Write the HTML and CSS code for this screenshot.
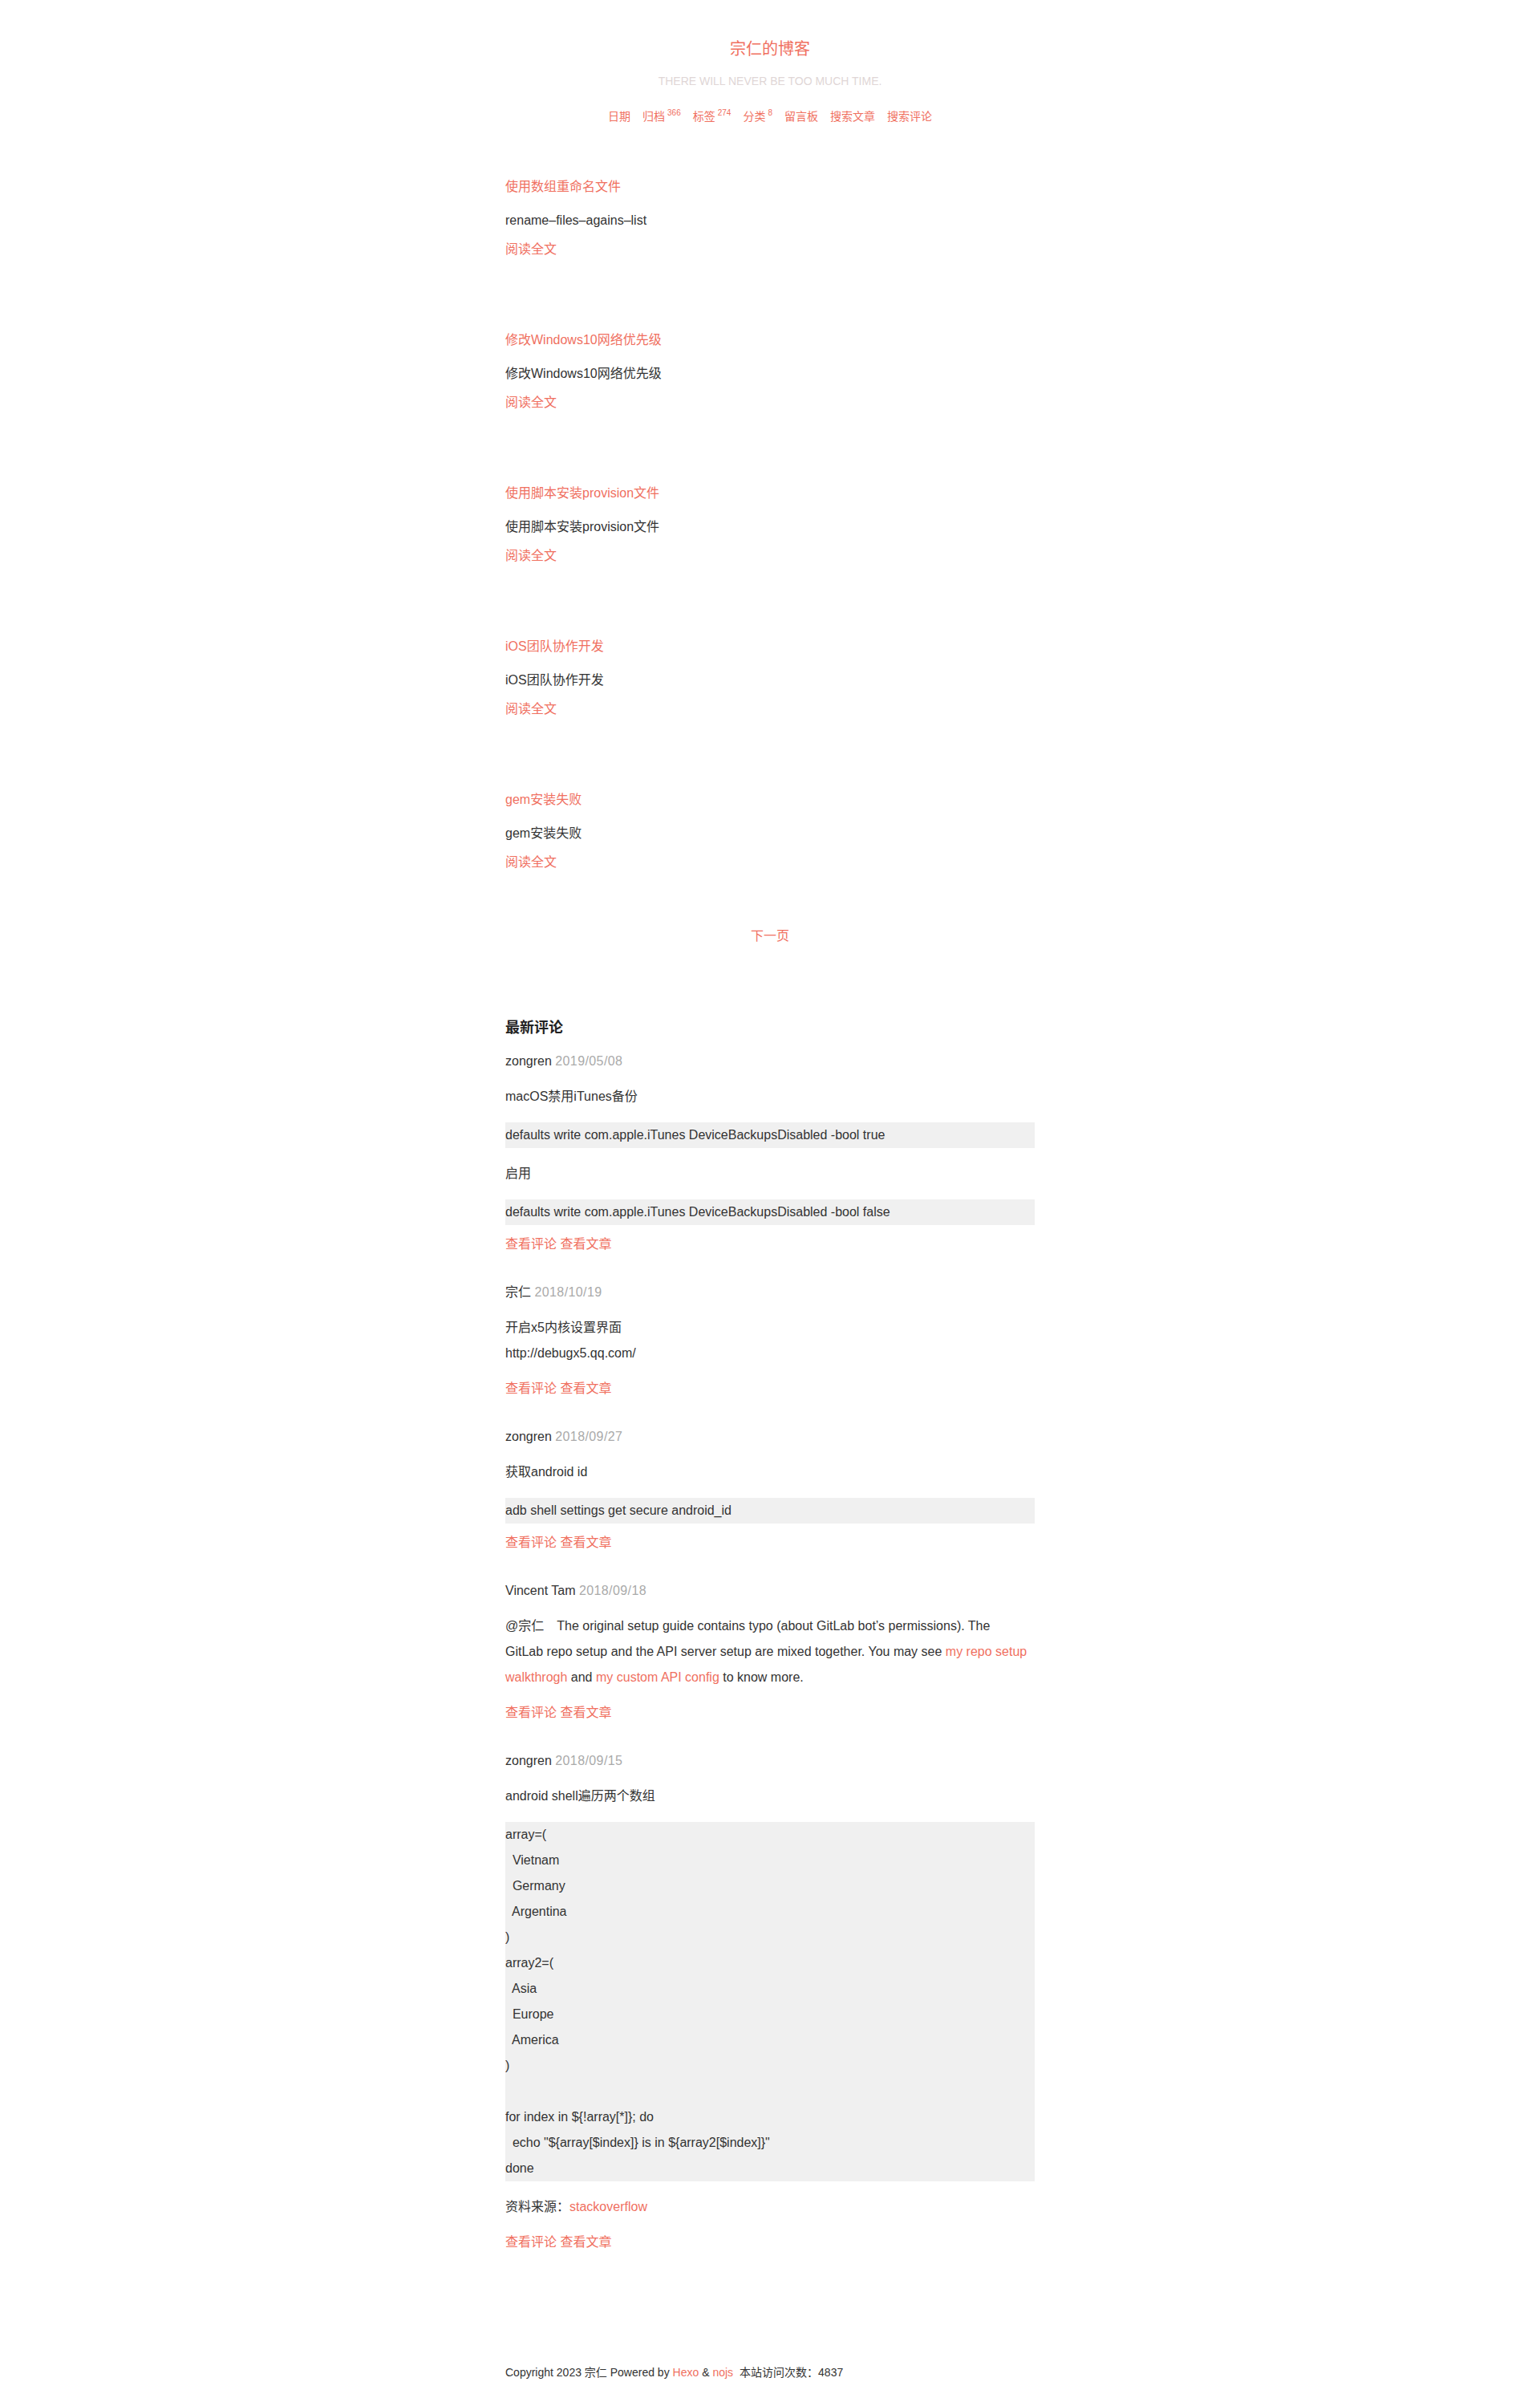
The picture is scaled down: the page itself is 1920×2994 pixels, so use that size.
FILE: index.html
```html
<!DOCTYPE html>
<html lang="zh-CN">
<head>
<meta charset="utf-8">
<title>宗仁的博客</title>
<link rel="stylesheet" href="styles.css">
</head>
<body>
<div class="page">
  <header class="site-header">
    <h1 class="site-title"><a href="#">宗仁的博客</a></h1>
    <p class="site-subtitle">THERE WILL NEVER BE TOO MUCH TIME.</p>
    <nav class="site-nav">
      <a href="#">日期</a>
      <a href="#">归档<sup>366</sup></a>
      <a href="#">标签<sup>274</sup></a>
      <a href="#">分类<sup>8</sup></a>
      <a href="#">留言板</a>
      <a href="#">搜索文章</a>
      <a href="#">搜索评论</a>
    </nav>
  </header>

  <main class="content">
    <section class="posts">
      <article class="post">
        <h2 class="post-title"><a href="#">使用数组重命名文件</a></h2>
        <p class="post-excerpt">rename–files–agains–list</p>
        <a class="post-more" href="#">阅读全文</a>
      </article>
      <article class="post">
        <h2 class="post-title"><a href="#">修改Windows10网络优先级</a></h2>
        <p class="post-excerpt">修改Windows10网络优先级</p>
        <a class="post-more" href="#">阅读全文</a>
      </article>
      <article class="post">
        <h2 class="post-title"><a href="#">使用脚本安装provision文件</a></h2>
        <p class="post-excerpt">使用脚本安装provision文件</p>
        <a class="post-more" href="#">阅读全文</a>
      </article>
      <article class="post">
        <h2 class="post-title"><a href="#">iOS团队协作开发</a></h2>
        <p class="post-excerpt">iOS团队协作开发</p>
        <a class="post-more" href="#">阅读全文</a>
      </article>
      <article class="post">
        <h2 class="post-title"><a href="#">gem安装失败</a></h2>
        <p class="post-excerpt">gem安装失败</p>
        <a class="post-more" href="#">阅读全文</a>
      </article>
    </section>

    <div class="pager"><a href="#">下一页</a></div>

    <section class="comments">
      <h3 class="comments-title">最新评论</h3>

      <div class="comment">
        <div class="c-meta">zongren <span class="c-date">2019/05/08</span></div>
        <div class="c-body">
          <p>macOS禁用iTunes备份</p>
          <pre>defaults write com.apple.iTunes DeviceBackupsDisabled -bool true</pre>
          <p>启用</p>
          <pre>defaults write com.apple.iTunes DeviceBackupsDisabled -bool false</pre>
        </div>
        <div class="c-links"><a href="#">查看评论</a> <a href="#">查看文章</a></div>
      </div>

      <div class="comment">
        <div class="c-meta">宗仁 <span class="c-date">2018/10/19</span></div>
        <div class="c-body">
          <p>开启x5内核设置界面<br>http://debugx5.qq.com/</p>
        </div>
        <div class="c-links"><a href="#">查看评论</a> <a href="#">查看文章</a></div>
      </div>

      <div class="comment">
        <div class="c-meta">zongren <span class="c-date">2018/09/27</span></div>
        <div class="c-body">
          <p>获取android id</p>
          <pre>adb shell settings get secure android_id</pre>
        </div>
        <div class="c-links"><a href="#">查看评论</a> <a href="#">查看文章</a></div>
      </div>

      <div class="comment">
        <div class="c-meta">Vincent Tam <span class="c-date">2018/09/18</span></div>
        <div class="c-body">
          <p class="c-text">@宗仁&emsp;The original setup guide contains typo (about GitLab bot’s permissions). The GitLab repo setup and the API server setup are mixed together. You may see <a href="#">my repo setup walkthrogh</a> and <a href="#">my custom API config</a> to know more.</p>
        </div>
        <div class="c-links"><a href="#">查看评论</a> <a href="#">查看文章</a></div>
      </div>

      <div class="comment">
        <div class="c-meta">zongren <span class="c-date">2018/09/15</span></div>
        <div class="c-body">
          <p>android shell遍历两个数组</p>
          <pre>array=(
  Vietnam
  Germany
  Argentina
)
array2=(
  Asia
  Europe
  America
)

for index in ${!array[*]}; do
  echo "${array[$index]} is in ${array2[$index]}"
done</pre>
          <p>资料来源：<a href="#">stackoverflow</a></p>
        </div>
        <div class="c-links"><a href="#">查看评论</a> <a href="#">查看文章</a></div>
      </div>
    </section>
  </main>

  <footer class="site-footer">
    Copyright 2023 宗仁 Powered by <a href="#">Hexo</a> &amp; <a href="#">nojs</a><span class="visits">本站访问次数：4837</span>
  </footer>
</div>
</body>
</html>
```

FILE: styles.css
```css
html, body {
  margin: 0;
  padding: 0;
  background: #ffffff;
}

body {
  font-family: "Liberation Sans", Arial, "Noto Sans CJK SC", sans-serif;
  font-size: 16px;
  line-height: 32px;
  color: #333333;
}

a {
  color: #f0705f;
  text-decoration: none;
}

.page {
  width: 660px;
  margin: 0 auto;
  padding-top: 41px;
  padding-bottom: 24px;
}

/* header */
.site-header {
  text-align: center;
}

.site-title {
  margin: 0;
  font-size: 20px;
  line-height: 40px;
  font-weight: normal;
}

.site-subtitle {
  margin: 0;
  font-size: 14px;
  line-height: 40px;
  color: #e0d6d6;
}

.site-nav {
  margin-top: 12px;
  display: flex;
  justify-content: center;
  gap: 15px;
  font-size: 14px;
  line-height: 24px;
}

.site-nav sup {
  font-size: 10px;
  line-height: 10px;
  margin-left: 3px;
  vertical-align: 6px;
}

/* posts */
.content {
  margin-top: 60px;
}

.posts {
  display: flex;
  flex-direction: column;
  gap: 81px;
}

.post-title {
  margin: 0 0 10px;
  font-size: 16px;
  line-height: 32px;
  font-weight: normal;
}

.post-excerpt {
  margin: 0;
}

.post-more {
  display: block;
  margin-top: 4px;
}

.pager {
  margin-top: 60px;
  text-align: center;
}

/* comments */
.comments {
  margin-top: 82px;
}

.comments-title {
  margin: 0 0 10px;
  font-size: 18px;
  line-height: 32px;
  font-weight: bold;
  color: #222222;
}

.comment {
  margin-bottom: 28px;
}

.c-date {
  color: #aaaaaa;
  letter-spacing: 0.4px;
}

.c-body p {
  margin: 12px 0;
}

.c-body .c-text {
  padding-right: 8px;
}

.c-body pre {
  margin: 16px 0;
  background: #f0f0f0;
  font-family: "Liberation Sans", Arial, "Noto Sans CJK SC", sans-serif;
  font-size: 16px;
  line-height: 32px;
  white-space: pre;
  color: #333333;
}

.c-body > pre:last-child {
  margin-bottom: 8px;
}

.site-footer {
  margin-top: 130px;
  font-size: 14px;
  line-height: 32px;
  color: #333333;
}

.visits {
  margin-left: 8px;
}
```
